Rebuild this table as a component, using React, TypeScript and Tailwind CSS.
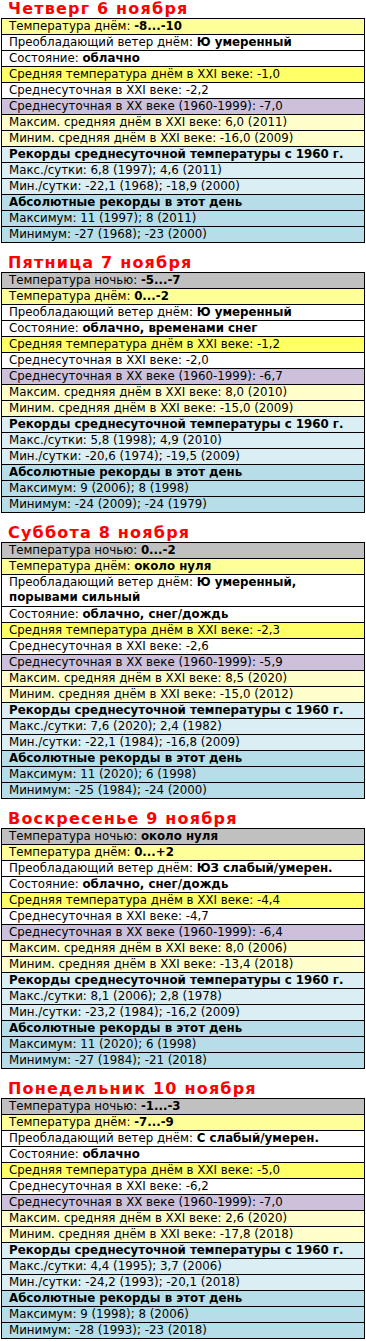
const BG = {
  night: "bg-[#c0c0c0]",
  day: "bg-[#ffff99]",
  white: "bg-white",
  avg: "bg-[#ffff66]",
  xx: "bg-[#ccc0da]",
  maxmin: "bg-[#ffffcc]",
  rec: "bg-[#daeef3]",
  abs: "bg-[#b6dde8]",
};

type Row = { bg: string; label: string; value?: string; bold?: boolean; tall?: boolean };

type Day = {
  title: string;
  night?: string;
  day: string;
  wind: string;
  windTall?: boolean;
  state: string;
  avg: string;
  avg21: string;
  avg20: string;
  max: string;
  min: string;
  recMax: string;
  recMin: string;
  absMax: string;
  absMin: string;
};

const days: Day[] = [
  {
    title: "Четверг 6 ноября",
    day: "-8...-10",
    wind: "Ю умеренный",
    state: "облачно",
    avg: "-1,0",
    avg21: "-2,2",
    avg20: "-7,0",
    max: "6,0 (2011)",
    min: "-16,0 (2009)",
    recMax: "6,8 (1997); 4,6 (2011)",
    recMin: "-22,1 (1968); -18,9 (2000)",
    absMax: "11 (1997); 8 (2011)",
    absMin: "-27 (1968); -23 (2000)",
  },
  {
    title: "Пятница 7 ноября",
    night: "-5...-7",
    day: "0...-2",
    wind: "Ю умеренный",
    state: "облачно, временами снег",
    avg: "-1,2",
    avg21: "-2,0",
    avg20: "-6,7",
    max: "8,0 (2010)",
    min: "-15,0 (2009)",
    recMax: "5,8 (1998); 4,9 (2010)",
    recMin: "-20,6 (1974); -19,5 (2009)",
    absMax: "9 (2006); 8 (1998)",
    absMin: "-24 (2009); -24 (1979)",
  },
  {
    title: "Суббота 8 ноября",
    night: "0...-2",
    day: "около нуля",
    wind: "Ю умеренный, порывами сильный",
    windTall: true,
    state: "облачно, снег/дождь",
    avg: "-2,3",
    avg21: "-2,6",
    avg20: "-5,9",
    max: "8,5 (2020)",
    min: "-15,0 (2012)",
    recMax: "7,6 (2020); 2,4 (1982)",
    recMin: "-22,1 (1984); -16,8 (2009)",
    absMax: "11 (2020); 6 (1998)",
    absMin: "-25 (1984); -24 (2000)",
  },
  {
    title: "Воскресенье 9 ноября",
    night: "около нуля",
    day: "0...+2",
    wind: "ЮЗ слабый/умерен.",
    state: "облачно, снег/дождь",
    avg: "-4,4",
    avg21: "-4,7",
    avg20: "-6,4",
    max: "8,0 (2006)",
    min: "-13,4 (2018)",
    recMax: "8,1 (2006); 2,8 (1978)",
    recMin: "-23,2 (1984); -16,2 (2009)",
    absMax: "11 (2020); 6 (1998)",
    absMin: "-27 (1984); -21 (2018)",
  },
  {
    title: "Понедельник 10 ноября",
    night: "-1...-3",
    day: "-7...-9",
    wind: "С слабый/умерен.",
    state: "облачно",
    avg: "-5,0",
    avg21: "-6,2",
    avg20: "-7,0",
    max: "2,6 (2020)",
    min: "-17,8 (2018)",
    recMax: "4,4 (1995); 3,7 (2006)",
    recMin: "-24,2 (1993); -20,1 (2018)",
    absMax: "9 (1998); 8 (2006)",
    absMin: "-28 (1993); -23 (2018)",
  },
];

function rowsFor(d: Day): Row[] {
  const rows: Row[] = [];
  if (d.night) rows.push({ bg: BG.night, label: "Температура ночью: ", value: d.night });
  rows.push(
    { bg: BG.day, label: "Температура днём: ", value: d.day },
    { bg: BG.white, label: "Преобладающий ветер днём: ", value: d.wind, tall: d.windTall },
    { bg: BG.white, label: "Состояние: ", value: d.state },
    { bg: BG.avg, label: "Средняя температура днём в XXI веке: " + d.avg },
    { bg: BG.white, label: "Среднесуточная в XXI веке: " + d.avg21 },
    { bg: BG.xx, label: "Среднесуточная в XX веке (1960-1999): " + d.avg20 },
    { bg: BG.maxmin, label: "Максим. средняя днём в XXI веке: " + d.max },
    { bg: BG.maxmin, label: "Миним. средняя днём в XXI веке: " + d.min },
    { bg: BG.rec, label: "Рекорды среднесуточной температуры с 1960 г.", bold: true },
    { bg: BG.rec, label: "Макс./сутки: " + d.recMax },
    { bg: BG.rec, label: "Мин./сутки: " + d.recMin },
    { bg: BG.abs, label: "Абсолютные рекорды в этот день", bold: true },
    { bg: BG.abs, label: "Максимум: " + d.absMax },
    { bg: BG.abs, label: "Минимум: " + d.absMin }
  );
  return rows;
}

function DayBlock({ d, first }: { d: Day; first: boolean }) {
  return (
    <section className={first ? "" : "mt-[11px]"}>
      <h2 className="h-[18px] pl-[8px] text-[16px] leading-[18px] tracking-[1.2px] font-bold text-[#ff0000]">
        {d.title}
      </h2>
      <div className="mx-[1px] border border-black">
        {rowsFor(d).map((r, i) => (
          <div
            key={i}
            className={`${r.bg} ${i > 0 ? "border-t border-black" : ""} pl-[7px] pr-[20px] text-[11.8px] leading-[15px] ${
              r.tall ? "pb-[1px]" : "whitespace-nowrap overflow-hidden"
            } ${r.bold ? "font-bold" : ""}`}
          >
            {r.label}
            {r.value && <b>{r.value}</b>}
          </div>
        ))}
      </div>
    </section>
  );
}

export default function App() {
  return (
    <div className="w-[366px] bg-white text-black font-['DejaVu_Sans',Verdana,sans-serif]">
      {days.map((d, i) => (
        <DayBlock key={d.title} d={d} first={i === 0} />
      ))}
    </div>
  );
}
